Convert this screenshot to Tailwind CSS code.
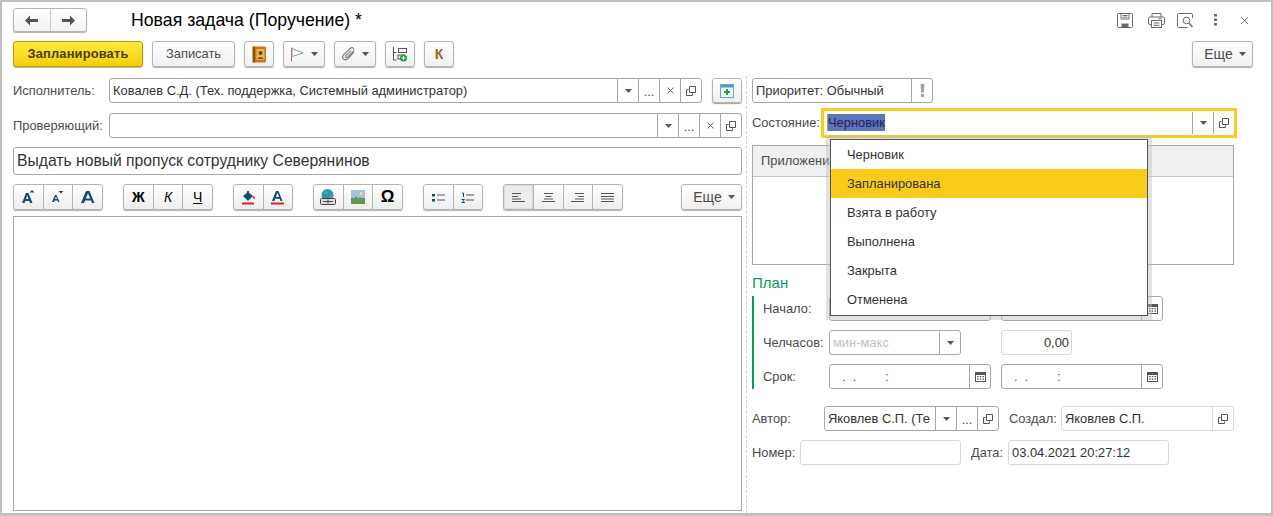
<!DOCTYPE html>
<html lang="ru">
<head>
<meta charset="utf-8">
<script src="https://cdn.jsdelivr.net/npm/@tailwindcss/browser@4"></script>
<title>Новая задача</title>
</head>
<body class="m-0 bg-white">
<div class="relative w-[1273px] h-[516px] overflow-hidden bg-white border-2 border-b-[3px] border-[#bfbfbf] font-['Liberation_Sans',Arial,sans-serif] text-[12.9px] text-[#4b4b4b] box-border">

  <!-- Header -->
  <div class="flex items-center h-[24px] mt-[6px] ml-[11px] mr-[11px]">
    <div class="flex w-[74px] h-[24px] rounded-[3px] border border-[#b4b4b4] bg-linear-to-b from-white to-[#f2f2f2] shadow-[0_1px_1px_#b0b0b0]">
      <div class="flex-1 flex items-center justify-center border-r border-[#c8c8c8]"><svg width="15" height="11" viewBox="0 0 15 11"><path d="M6 0.5 1 5.5l5 5V7h8V4H6z" fill="#555"/></svg></div>
      <div class="flex-1 flex items-center justify-center"><svg width="15" height="11" viewBox="0 0 15 11"><path d="M9 0.5 14 5.5l-5 5V7H1V4h8z" fill="#555"/></svg></div>
    </div>
    <div class="ml-[44px] text-[17.7px] leading-[24px] text-black">Новая задача (Поручение) *</div>
    <div class="ml-auto flex items-center">
      <svg class="mr-[15px]" width="16" height="15" viewBox="0 0 16 15" fill="none" stroke="#6a6a6a"><path d="M1.5.5h13a1 1 0 0 1 1 1v12a1 1 0 0 1-1 1h-13a1 1 0 0 1-1-1v-12a1 1 0 0 1 1-1z"/><path d="M4 .5v5.5h8V.5M5.500 2.500h5M5.500 4.200h5"/><rect x="4.500" y="10.500" width="7" height="4" fill="#6a6a6a" stroke="none"/></svg>
      <svg class="mr-[12px]" width="17" height="15" viewBox="0 0 17 15" fill="none" stroke="#6a6a6a"><path d="M4 4V.5h9V4"/><path d="M3.500 11.500h-1.500a1.500 1.500 0 0 1-1.500-1.500V5.500a1.500 1.500 0 0 1 1.500-1.500h13a1.500 1.500 0 0 1 1.500 1.500V10a1.500 1.500 0 0 1-1.500 1.500h-1.500"/><rect x="3.500" y="7.500" width="10" height="7" fill="#fff"/><path d="M5.500 10h6M5.500 12.300h6M10.500 5.800h3"/></svg>
      <svg class="mr-[21px]" width="16" height="15" viewBox="0 0 16 15" fill="none" stroke="#6a6a6a"><path d="M15.500 5V1.500a1 1 0 0 0-1-1h-13a1 1 0 0 0-1 1v12a1 1 0 0 0 1 1h9"/><circle cx="9.500" cy="7.500" r="3.300"/><path d="M12 10l3.500 4" stroke-width="1.500"/></svg>
      <svg class="mr-[23px]" width="3" height="12" viewBox="0 0 3 12" fill="#6a6a6a"><rect width="3" height="2.500"/><rect y="4.500" width="3" height="2.500"/><rect y="9" width="3" height="2.500"/></svg>
      <svg class="mr-[11px]" width="9" height="9" viewBox="0 0 9 9" stroke="#777" fill="none"><path d="M1 1l7 7M8 1 1 8"/></svg>
    </div>
  </div>

  <!-- Command bar -->
  <div class="flex items-center h-[26px] mt-[9px] ml-[11px] mr-[18px]">
    <div class="flex items-center justify-center w-[130px] h-[26px] rounded-[3px] border border-[#bd9a00] bg-linear-to-b from-[#ffe93d] to-[#f4ce00] font-bold text-[#4b4000] tracking-[0.15px] shadow-[0_1px_1px_#b8b8b8]">Запланировать</div>
    <div class="flex items-center justify-center w-[83px] h-[26px] ml-[9px] rounded-[3px] border border-[#b4b4b4] bg-linear-to-b from-white to-[#f0f0f0] shadow-[0_1px_1px_#b0b0b0]">Записать</div>
    <div class="flex items-center justify-center w-[30px] h-[26px] ml-[9px] rounded-[3px] border border-[#b4b4b4] bg-linear-to-b from-white to-[#f0f0f0] shadow-[0_1px_1px_#b0b0b0]">
      <svg width="15" height="17" viewBox="0 0 15 17"><rect x="1" y="0.500" width="13" height="16" rx="1.500" fill="#c8780f"/><rect x="0.500" y="0.500" width="2.500" height="16" fill="#8e5208"/><rect x="4.500" y="3" width="8" height="11" fill="#e8b45a"/><circle cx="8.500" cy="7" r="2" fill="#7a4a0a"/><path d="M5.500 13c0-2.500 6-2.500 6 0z" fill="#7a4a0a"/></svg>
    </div>
    <div class="flex items-center justify-center gap-[7px] w-[42px] h-[26px] ml-[9px] rounded-[3px] border border-[#b4b4b4] bg-linear-to-b from-white to-[#f0f0f0] shadow-[0_1px_1px_#b0b0b0]">
      <svg width="14" height="15" viewBox="0 0 14 15" fill="none"><path d="M1.500 0.500V14.500" stroke="#a87070"/><path d="M2 1.500l11 4.500L2 9.500z" stroke="#9a9a9a" fill="#fff"/></svg>
      <svg width="7" height="4" viewBox="0 0 7 4"><path d="M0 0h7L3.500 4z" fill="#555"/></svg>
    </div>
    <div class="flex items-center justify-center gap-[6px] w-[42px] h-[26px] ml-[9px] rounded-[3px] border border-[#b4b4b4] bg-linear-to-b from-white to-[#f0f0f0] shadow-[0_1px_1px_#b0b0b0]">
      <svg width="14" height="14" viewBox="0 0 14 14" fill="none" stroke="#888" stroke-width="1.200"><path d="M12 5 6 11.500c-1.500 1.500-3.500 1.500-4.500.5S0.500 9 2 7.500L8 1.500c1-1 2.500-1 3.300-.2s.8 2.200-.2 3.200L5.500 10.200c-.6.600-1.300.6-1.700.2s-.4-1.100.2-1.700L9 3.700"/></svg>
      <svg width="7" height="4" viewBox="0 0 7 4"><path d="M0 0h7L3.500 4z" fill="#555"/></svg>
    </div>
    <div class="flex items-center justify-center w-[30px] h-[26px] ml-[9px] rounded-[3px] border border-[#b4b4b4] bg-linear-to-b from-white to-[#f0f0f0] shadow-[0_1px_1px_#b0b0b0]">
      <svg width="16" height="16" viewBox="0 0 16 16" fill="none"><path d="M1.500 1v13h3M1.500 6.500h3" stroke="#555"/><rect x="6.500" y="2.500" width="8" height="4" stroke="#555"/><rect x="6" y="9" width="5" height="4" stroke="#555"/><circle cx="11.500" cy="12" r="3.500" fill="#1c9a4a"/><path d="M9.500 12h4M11.500 10v4" stroke="#fff"/></svg>
    </div>
    <div class="flex items-center justify-center w-[30px] h-[26px] ml-[9px] rounded-[3px] border border-[#b4b4b4] bg-linear-to-b from-white to-[#f0f0f0] shadow-[0_1px_1px_#b0b0b0] font-bold text-[14px] text-[#8a6a2f]">К</div>
    <div class="flex items-center justify-center gap-[6px] w-[61px] h-[26px] ml-auto rounded-[3px] border border-[#b4b4b4] bg-linear-to-b from-white to-[#f0f0f0] shadow-[0_1px_1px_#b0b0b0] text-[14px] pl-[5px]">Еще <svg width="7" height="4" viewBox="0 0 7 4"><path d="M0 0h7L3.500 4z" fill="#555"/></svg></div>
  </div>

  <!-- Body -->
  <div class="flex h-[437px] mt-[9px] ml-[11px]">
    <!-- Left column -->
    <div class="w-[729px] pt-[2px] shrink-0">
      <div class="flex items-center h-[25px]">
        <div class="w-[96px]">Исполнитель:</div>
        <div class="flex items-stretch w-[593px] h-[25px] rounded-[3px] border border-[#a8a8a8]">
          <div class="flex-1 px-[3px] leading-[23px] text-[#333] min-w-0 truncate">Ковалев С.Д. (Тех. поддержка, Системный администратор)</div>
          <div class="w-[21px] flex items-center justify-center border-l border-[#a8a8a8]"><svg width="7" height="4" viewBox="0 0 7 4"><path d="M0 0h7L3.500 4z" fill="#555"/></svg></div>
          <div class="w-[21px] flex items-center justify-center border-l border-[#a8a8a8] leading-none pt-[3px]">...</div>
          <div class="w-[21px] flex items-center justify-center border-l border-[#a8a8a8]"><svg width="7" height="7" viewBox="0 0 7 7" stroke="#666" fill="none"><path d="M.5.500l6 6M6.500.500l-6 6"/></svg></div>
          <div class="w-[21px] flex items-center justify-center border-l border-[#a8a8a8]"><svg width="10" height="10" viewBox="0 0 10 10" fill="none" stroke="#555"><path d="M3.500.5h6v6h-6z"/><path d="M2.500 3.500h-2v6h6v-2"/></svg></div>
        </div>
        <div class="flex items-center justify-center w-[30px] h-[25px] ml-[10px] rounded-[3px] border border-[#b4b4b4] bg-linear-to-b from-white to-[#eeeeee] shadow-[0_1px_1px_#a0a0a0]">
          <svg width="14" height="14" viewBox="0 0 14 14"><rect x=".5" y=".5" width="13" height="13" fill="#eef6fb" stroke="#6aa7cf"/><rect x="1" y="1" width="12" height="2.500" fill="#4f9bd0"/><path d="M7 5v6M4 8h6" stroke="#2ca02c" stroke-width="2"/></svg>
        </div>
      </div>
      <div class="flex items-center h-[25px] mt-[10px]">
        <div class="w-[96px]">Проверяющий:</div>
        <div class="flex items-stretch w-[633px] h-[25px] rounded-[3px] border border-[#a8a8a8]">
          <div class="flex-1"></div>
          <div class="w-[21px] flex items-center justify-center border-l border-[#a8a8a8]"><svg width="7" height="4" viewBox="0 0 7 4"><path d="M0 0h7L3.500 4z" fill="#555"/></svg></div>
          <div class="w-[21px] flex items-center justify-center border-l border-[#a8a8a8] leading-none pt-[3px]">...</div>
          <div class="w-[21px] flex items-center justify-center border-l border-[#a8a8a8]"><svg width="7" height="7" viewBox="0 0 7 7" stroke="#666" fill="none"><path d="M.5.500l6 6M6.500.500l-6 6"/></svg></div>
          <div class="w-[21px] flex items-center justify-center border-l border-[#a8a8a8]"><svg width="10" height="10" viewBox="0 0 10 10" fill="none" stroke="#555"><path d="M3.500.5h6v6h-6z"/><path d="M2.500 3.500h-2v6h6v-2"/></svg></div>
        </div>
      </div>
      <div class="h-[28px] mt-[9px] rounded-[3px] border border-[#a8a8a8] px-[3px] text-[15.7px] leading-[26px] text-[#333]">Выдать новый пропуск сотруднику Северянинов</div>

      <!-- Editor toolbar -->
      <div class="flex h-[26px] mt-[9px] text-[#222]">
        <div class="flex w-[90px] rounded-[3px] border border-[#b4b4b4] bg-linear-to-b from-white to-[#eeeeee] shadow-[0_1px_1px_#b0b0b0]">
          <div class="flex-1 flex items-center justify-center border-r border-[#b4b4b4]"><svg width="13" height="14" viewBox="0 0 13 14" fill="#174a72"><path d="M0 13 4 3h2.500l4 10H8l-.7-2H3.200l-.7 2zM3.900 9h2.700L5.250 5.300zM10 0l2.500 2.500h-5z"/></svg></div>
          <div class="flex-1 flex items-center justify-center border-r border-[#b4b4b4]"><svg width="12" height="12" viewBox="0 0 12 12" fill="#174a72"><path d="M0 11 3 4h1.500l3 7H6l-.5-1.500h-3L2 11zM2.900 8h2.200L4 5.500zM6.500 0h5L9 2.500z"/></svg></div>
          <div class="flex-1 flex items-center justify-center"><svg width="14" height="12" viewBox="0 0 14 12" fill="#174a72"><path d="M0 12 5 0h3.500l5 12H11l-1-2.500H4L3 12zM4.800 7.500h4.400L7 2.200z"/></svg></div>
        </div>
        <div class="flex w-[90px] ml-[20px] rounded-[3px] border border-[#b4b4b4] bg-linear-to-b from-white to-[#eeeeee] shadow-[0_1px_1px_#b0b0b0] text-[14px]">
          <div class="flex-1 flex items-center justify-center border-r border-[#b4b4b4] font-bold text-black">Ж</div>
          <div class="flex-1 flex items-center justify-center border-r border-[#b4b4b4] italic text-black">К</div>
          <div class="flex-1 flex items-center justify-center underline text-black">Ч</div>
        </div>
        <div class="flex w-[60px] ml-[20px] rounded-[3px] border border-[#b4b4b4] bg-linear-to-b from-white to-[#eeeeee] shadow-[0_1px_1px_#b0b0b0]">
          <div class="flex-1 flex items-center justify-center border-r border-[#b4b4b4]"><svg width="13" height="15" viewBox="0 0 13 15"><path d="M1 6l5-4 5 4-5 5z" fill="#174a72"/><path d="M5 1h2v3H5z" fill="#174a72"/><path d="M11 6l1.500 3" stroke="#d8232a" stroke-width="1.500"/><rect y="12.500" width="12" height="2" fill="#d8232a"/></svg></div>
          <div class="flex-1 flex items-center justify-center"><svg width="13" height="15" viewBox="0 0 13 15"><path d="M1 11 5 1h2.500l4 10H9.500l-.8-2.300H4.300L3.500 11zM4.900 7h3.200L6.500 2.800z" fill="#174a72"/><rect y="12.500" width="13" height="2" fill="#d8232a"/></svg></div>
        </div>
        <div class="flex w-[90px] ml-[20px] rounded-[3px] border border-[#b4b4b4] bg-linear-to-b from-white to-[#eeeeee] shadow-[0_1px_1px_#b0b0b0]">
          <div class="flex-1 flex items-center justify-center border-r border-[#b4b4b4]"><svg width="16" height="16" viewBox="0 0 16 16"><circle cx="7.500" cy="6" r="6" fill="#2b8fd0"/><path d="M4 2c2-1 4 0 4 2S5 6 4 5zM9 7c2-1 3 0 3 1l-2 2z" fill="#57ad3f"/><rect x=".5" y="9.500" width="15" height="6" rx="1" fill="#ddd" stroke="#444"/><path d="M3 12.500h10M8 10.500v4" stroke="#444"/></svg></div>
          <div class="flex-1 flex items-center justify-center border-r border-[#b4b4b4]"><svg width="14" height="14" viewBox="0 0 14 14"><rect width="14" height="14" fill="#9fc4dc"/><rect y="8" width="14" height="6" fill="#5c9a4a"/><path d="M2 10l3-4 3 4zM6 10l3-3 3 3z" fill="#6f8a8f"/><circle cx="10" cy="3.500" r="1.500" fill="#f4e36a"/></svg></div>
          <div class="flex-1 flex items-center justify-center font-bold text-[17px] text-black">Ω</div>
        </div>
        <div class="flex w-[60px] ml-[20px] rounded-[3px] border border-[#b4b4b4] bg-linear-to-b from-white to-[#eeeeee] shadow-[0_1px_1px_#b0b0b0]">
          <div class="flex-1 flex items-center justify-center border-r border-[#b4b4b4]"><svg width="13" height="9" viewBox="0 0 13 9"><rect y="1" width="3" height="2.500" fill="#174a72"/><rect y="6" width="3" height="2.500" fill="#174a72"/><path d="M5 2h8M5 7h8" stroke="#555"/></svg></div>
          <div class="flex-1 flex items-center justify-center"><svg width="13" height="11" viewBox="0 0 13 11"><path d="M1 1h1.500v4M.5 7.500h3l-2.500 3h3" stroke="#174a72" fill="none"/><path d="M5 3h8M5 8h8" stroke="#555"/></svg></div>
        </div>
        <div class="flex w-[120px] ml-[20px] rounded-[3px] border border-[#b4b4b4] bg-linear-to-b from-white to-[#eeeeee] shadow-[0_1px_1px_#b0b0b0]">
          <div class="flex-1 flex items-center justify-center border-r border-[#b4b4b4] bg-[#ececec] shadow-[inset_0_0_2px_#aaa]"><svg width="13" height="9" viewBox="0 0 13 9" stroke="#555"><path d="M0 .5h9M0 3.500h6M0 6h9M0 8.500h13"/></svg></div>
          <div class="flex-1 flex items-center justify-center border-r border-[#b4b4b4]"><svg width="13" height="9" viewBox="0 0 13 9" stroke="#555"><path d="M2 .5h9M3.500 3.500h6M2 6h9M0 8.500h13"/></svg></div>
          <div class="flex-1 flex items-center justify-center border-r border-[#b4b4b4]"><svg width="13" height="9" viewBox="0 0 13 9" stroke="#555"><path d="M4 .5h9M7 3.500h6M4 6h9M0 8.500h13"/></svg></div>
          <div class="flex-1 flex items-center justify-center"><svg width="13" height="9" viewBox="0 0 13 9" stroke="#555"><path d="M0 .5h13M0 3.500h13M0 6h13M0 8.500h13"/></svg></div>
        </div>
        <div class="flex items-center justify-center gap-[6px] w-[61px] ml-auto rounded-[3px] border border-[#b4b4b4] bg-linear-to-b from-white to-[#f0f0f0] shadow-[0_1px_1px_#b0b0b0] text-[14px] text-[#4b4b4b] pl-[5px]">Еще <svg width="7" height="4" viewBox="0 0 7 4"><path d="M0 0h7L3.500 4z" fill="#555"/></svg></div>
      </div>
      <div class="h-[295px] mt-[6px] border border-[#a8a8a8]"></div>
    </div>

    <!-- Separator -->
    <div class="w-[10px] shrink-0 flex justify-center"><div class="mr-[2px] w-0 h-full border-l border-dashed border-[#d0d0d0]"></div></div>

    <!-- Right column -->
    <div class="w-[490px] pt-[2px] shrink-0">
      <div class="flex items-stretch w-[181px] h-[25px] rounded-[3px] border border-[#a8a8a8]">
        <div class="flex-1 px-[3px] leading-[23px] text-[#333] whitespace-nowrap">Приоритет: Обычный</div>
        <div class="w-[21px] flex items-center justify-center border-l border-[#a8a8a8]"><svg width="5" height="13" viewBox="0 0 5 13" fill="#a0a0a0"><path d="M.5 0h4l-.7 8.500H1.200z"/><rect x="1" y="10" width="3" height="3"/></svg></div>
      </div>
      <div class="flex items-center h-[30px] mt-[5px]">
        <div class="w-[69px]">Состояние:</div>
        <div class="flex items-stretch w-[416px] h-[30px] border-[3px] border-[#fbcb1c]">
          <div class="flex-1 px-[3px] pt-[4px] leading-[15px]"><span class="bg-[#6073c2] text-[#22264a] px-0 py-[1px] border-l border-[#c8a020]">Черновик</span></div>
          <div class="my-[1px] w-[21px] flex items-center justify-center border-l border-[#a8a8a8]"><svg width="7" height="4" viewBox="0 0 7 4"><path d="M0 0h7L3.500 4z" fill="#555"/></svg></div>
          <div class="my-[1px] w-[21px] flex items-center justify-center border-l border-[#a8a8a8]"><svg width="10" height="10" viewBox="0 0 10 10" fill="none" stroke="#555"><path d="M3.500.5h6v6h-6z"/><path d="M2.500 3.500h-2v6h6v-2"/></svg></div>
        </div>
      </div>
      <div class="w-[482px] h-[120px] mt-[7px] border border-[#a8a8a8]">
        <div class="h-[31px] bg-[#f0f0f0] border-b border-[#c8c8c8] pl-[8px] leading-[30px]">Приложения</div>
      </div>
      <div class="mt-[9px] text-[15px] leading-[18px] text-[#0a9a50]">План</div>
      <div class="mt-[4px] h-[93px] border-l-2 border-[#0a9a50] pl-[9px]">
        <div class="flex items-center h-[25px]">
          <div class="w-[66px]">Начало:</div>
          <div class="w-[162px] h-[25px] rounded-[3px] border border-[#a8a8a8]"></div>
          <div class="flex justify-end w-[162px] h-[25px] ml-[10px] rounded-[3px] border border-[#a8a8a8]">
            <div class="w-[21px] flex items-center justify-center border-l border-[#a8a8a8]"><svg width="11" height="11" viewBox="0 0 11 11"><path d="M0 1h11v10H0z" fill="#555"/><path d="M1 4h9v6H1z" fill="#fff"/><path d="M2 5h1.500v1.300H2zM4.700 5h1.500v1.300H4.700zM7.500 5H9v1.300H7.500zM2 7.500h1.500v1.300H2zM4.700 7.500h1.500v1.300H4.700zM7.500 7.500H9v1.300H7.500z" fill="#555"/></svg></div>
          </div>
        </div>
        <div class="flex items-center h-[25px] mt-[9px]">
          <div class="w-[66px]">Челчасов:</div>
          <div class="flex w-[132px] h-[25px] rounded-[3px] border border-[#a8a8a8]">
            <div class="flex-1 px-[3px] leading-[23px] text-[#c0c0c0]">мин-макс</div>
            <div class="w-[21px] flex items-center justify-center border-l border-[#a8a8a8]"><svg width="7" height="4" viewBox="0 0 7 4"><path d="M0 0h7L3.500 4z" fill="#555"/></svg></div>
          </div>
          <div class="w-[71px] h-[25px] ml-[40px] rounded-[3px] border border-[#d8d8d8] px-[2px] leading-[23px] text-right text-[#333]">0,00</div>
        </div>
        <div class="flex items-center h-[25px] mt-[9px]">
          <div class="w-[66px]">Срок:</div>
          <div class="flex w-[162px] h-[25px] rounded-[3px] border border-[#a8a8a8]">
            <div class="flex-1 pl-[12px] leading-[23px] whitespace-pre">.  .        :</div>
            <div class="w-[21px] flex items-center justify-center border-l border-[#a8a8a8]"><svg width="11" height="11" viewBox="0 0 11 11"><path d="M0 1h11v10H0z" fill="#555"/><path d="M1 4h9v6H1z" fill="#fff"/><path d="M2 5h1.500v1.300H2zM4.700 5h1.500v1.300H4.700zM7.500 5H9v1.300H7.500zM2 7.500h1.500v1.300H2zM4.700 7.500h1.500v1.300H4.700zM7.500 7.500H9v1.300H7.500z" fill="#555"/></svg></div>
          </div>
          <div class="flex w-[162px] h-[25px] ml-[10px] rounded-[3px] border border-[#a8a8a8]">
            <div class="flex-1 pl-[12px] leading-[23px] whitespace-pre">.  .        :</div>
            <div class="w-[21px] flex items-center justify-center border-l border-[#a8a8a8]"><svg width="11" height="11" viewBox="0 0 11 11"><path d="M0 1h11v10H0z" fill="#555"/><path d="M1 4h9v6H1z" fill="#fff"/><path d="M2 5h1.500v1.300H2zM4.700 5h1.500v1.300H4.700zM7.500 5H9v1.300H7.500zM2 7.500h1.500v1.300H2zM4.700 7.500h1.500v1.300H4.700zM7.500 7.500H9v1.300H7.500z" fill="#555"/></svg></div>
          </div>
        </div>
      </div>
      <div class="flex items-center h-[25px] mt-[17px]">
        <div class="w-[72px]">Автор:</div>
        <div class="flex w-[175px] h-[25px] rounded-[3px] border border-[#a8a8a8]">
          <div class="flex-1 pl-[3px] leading-[23px] text-[#333] overflow-hidden whitespace-nowrap min-w-0">Яковлев С.П. (Те</div>
          <div class="w-[21px] shrink-0 flex items-center justify-center border-l border-[#a8a8a8]"><svg width="7" height="4" viewBox="0 0 7 4"><path d="M0 0h7L3.500 4z" fill="#555"/></svg></div>
          <div class="w-[21px] shrink-0 flex items-center justify-center border-l border-[#a8a8a8] leading-none pt-[3px]">...</div>
          <div class="w-[21px] shrink-0 flex items-center justify-center border-l border-[#a8a8a8]"><svg width="10" height="10" viewBox="0 0 10 10" fill="none" stroke="#555"><path d="M3.500.5h6v6h-6z"/><path d="M2.500 3.500h-2v6h6v-2"/></svg></div>
        </div>
        <div class="w-[52px] ml-[10px]">Создал:</div>
        <div class="flex w-[173px] h-[25px] rounded-[3px] border border-[#d8d8d8]">
          <div class="flex-1 pl-[3px] leading-[23px] text-[#333]">Яковлев С.П.</div>
          <div class="w-[21px] flex items-center justify-center border-l border-[#d8d8d8]"><svg width="10" height="10" viewBox="0 0 10 10" fill="none" stroke="#555"><path d="M3.500.5h6v6h-6z"/><path d="M2.500 3.500h-2v6h6v-2"/></svg></div>
        </div>
      </div>
      <div class="flex items-center h-[25px] mt-[9px]">
        <div class="w-[48px]">Номер:</div>
        <div class="w-[161px] h-[25px] rounded-[3px] border border-[#d8d8d8]"></div>
        <div class="w-[37px] ml-[10px]">Дата:</div>
        <div class="w-[161px] h-[25px] rounded-[3px] border border-[#d8d8d8] pl-[3px] leading-[23px] text-[#333]">03.04.2021 20:27:12</div>
      </div>
    </div>
  </div>

  <!-- Dropdown popup -->
  <div class="absolute left-[828px] top-[137px] w-[318px] h-[177px] bg-white border border-[#555] shadow-[0_0_0_4px_rgba(190,190,190,0.45)] text-[#333]">
    <div class="h-[29px] pl-[16px] leading-[29px]">Черновик</div>
    <div class="h-[29px] pl-[16px] leading-[29px] bg-[#fbcb1c]">Запланирована</div>
    <div class="h-[29px] pl-[16px] leading-[29px]">Взята в работу</div>
    <div class="h-[29px] pl-[16px] leading-[29px]">Выполнена</div>
    <div class="h-[29px] pl-[16px] leading-[29px]">Закрыта</div>
    <div class="h-[29px] pl-[16px] leading-[29px]">Отменена</div>
  </div>
</div>
</body>
</html>
